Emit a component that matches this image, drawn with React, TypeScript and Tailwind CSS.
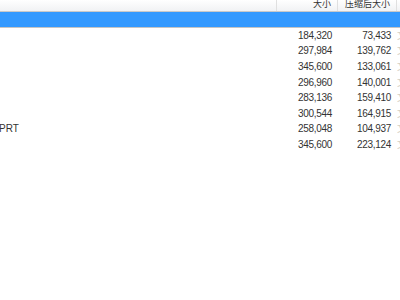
import React from 'react';

const rows = [
  { name: '', size: '184,320', packed: '73,433' },
  { name: '', size: '297,984', packed: '139,762' },
  { name: '', size: '345,600', packed: '133,061' },
  { name: '', size: '296,960', packed: '140,001' },
  { name: '', size: '283,136', packed: '159,410' },
  { name: '', size: '300,544', packed: '164,915' },
  { name: 'PRT', size: '258,048', packed: '104,937' },
  { name: '', size: '345,600', packed: '223,124' },
];

const font = { fontFamily: '"Liberation Sans", "Noto Sans CJK SC", sans-serif' };

export default function App() {
  return (
    <div className="w-[400px] h-[300px] bg-white overflow-hidden text-[10px] text-[#333]" style={font}>
      {/* column header */}
      <div className="flex h-[12px] bg-gradient-to-b from-[#ffffff] to-[#f1f2f4] border-b border-[#c9c9c9] text-[9px] leading-[9px] overflow-hidden">
        <div className="w-[277px] border-r border-[#e0e0e0]" />
        <div className="w-[61px] border-r border-[#e0e0e0] pr-[6px] text-right">大小</div>
        <div className="w-[59px] border-r border-[#e0e0e0] pr-[6px] text-right">压缩后大小</div>
        <div className="flex-1" />
      </div>

      {/* selected row */}
      <div className="h-[16px] bg-[#3399ff] border-b border-[#c4c4c4]" />

      {/* file rows */}
      {rows.map((r, i) => (
        <div key={i} className="flex h-[15.6px] items-center leading-none">
          <div className="w-[277px] overflow-hidden whitespace-nowrap">
            <span className="ml-[-1px]">{r.name}</span>
          </div>
          <div className="w-[61px] pr-[6px] text-right tracking-[-0.3px]">{r.size}</div>
          <div className="w-[59px] pr-[6px] text-right tracking-[-0.3px]">{r.packed}</div>
          <div className="flex-1 overflow-hidden text-[#d6d0c4] whitespace-nowrap">文</div>
        </div>
      ))}
    </div>
  );
}
